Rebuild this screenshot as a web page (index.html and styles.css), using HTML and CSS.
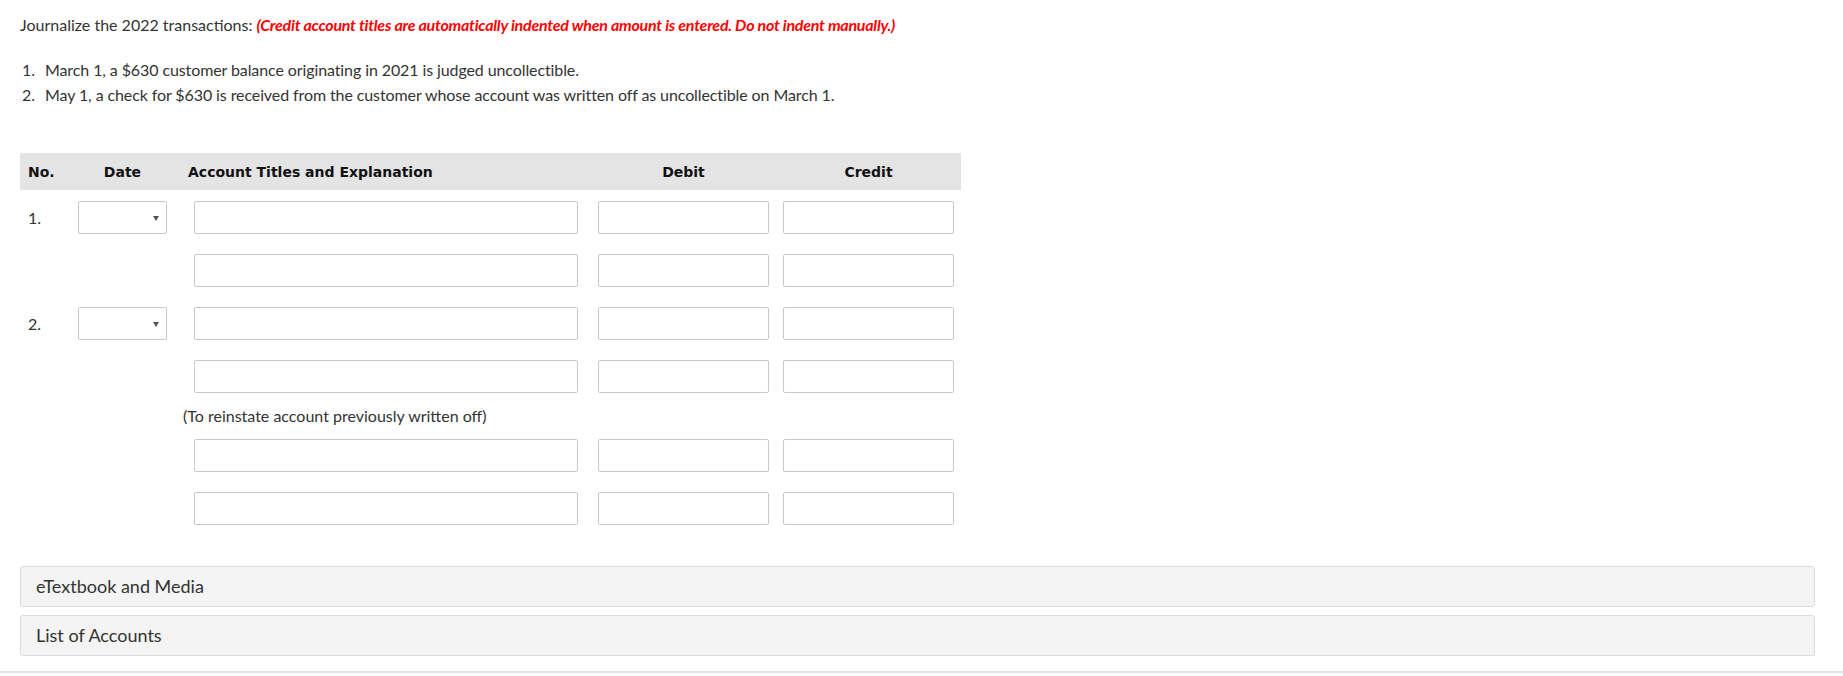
FILE: index.html
```html
<!DOCTYPE html>
<html lang="en">
<head>
    <meta charset="UTF-8">
    <meta name="viewport" content="width=device-width, initial-scale=1.0">
    <title>Journal Entries</title>
    <link rel="stylesheet" href="styles.css">
</head>
<body>

    <div class="question">
        <p class="instructions">Journalize the 2022 transactions: <span class="warning">(Credit account titles are automatically indented when amount is entered. Do not indent manually.)</span></p>

        <ol class="steps">
            <li><span class="num">1.</span>March 1, a $630 customer balance originating in 2021 is judged uncollectible.</li>
            <li><span class="num">2.</span>May 1, a check for $630 is received from the customer whose account was written off as uncollectible on March 1.</li>
        </ol>

        <!-- Tabla del asiento -->
        <div class="journal">
            <div class="journal-head">
                <div class="col-no">No.</div>
                <div class="col-date">Date</div>
                <div class="col-title">Account Titles and Explanation</div>
                <div class="col-amount">Debit</div>
                <div class="col-amount">Credit</div>
            </div>

            <div class="entry-row">
                <div class="entry-no">1.</div>
                <div class="select-box"><select><option></option></select></div>
                <input type="text" class="field field-title">
                <input type="text" class="field field-amount">
                <input type="text" class="field field-amount">
            </div>
            <div class="entry-row">
                <div class="entry-no"></div>
                <div></div>
                <input type="text" class="field field-title">
                <input type="text" class="field field-amount">
                <input type="text" class="field field-amount">
            </div>

            <div class="entry-row">
                <div class="entry-no">2.</div>
                <div class="select-box"><select><option></option></select></div>
                <input type="text" class="field field-title">
                <input type="text" class="field field-amount">
                <input type="text" class="field field-amount">
            </div>
            <div class="entry-row">
                <div class="entry-no"></div>
                <div></div>
                <input type="text" class="field field-title">
                <input type="text" class="field field-amount">
                <input type="text" class="field field-amount">
            </div>

            <div class="entry-note">(To reinstate account previously written off)</div>

            <div class="entry-row">
                <div class="entry-no"></div>
                <div></div>
                <input type="text" class="field field-title">
                <input type="text" class="field field-amount">
                <input type="text" class="field field-amount">
            </div>
            <div class="entry-row">
                <div class="entry-no"></div>
                <div></div>
                <input type="text" class="field field-title">
                <input type="text" class="field field-amount">
                <input type="text" class="field field-amount">
            </div>
        </div>

        <div class="panel">eTextbook and Media</div>
        <div class="panel">List of Accounts</div>
    </div>

    <div class="footer-line"></div>

</body>
</html>
```

FILE: styles.css
```css
/* Base */
body {
    margin: 0;
    font-family: Lato, "Open Sans", Arial, sans-serif;
    font-size: 16px;
    color: #333;
    background: #fff;
}

.question {
    padding: 14px 28px 0 20px;
}

.instructions {
    margin: 0;
    line-height: 22px;
}

.warning {
    color: #ff0000;
    font-weight: bold;
    font-style: italic;
    letter-spacing: -0.25px;
}

/* Lista de transacciones */
.steps {
    list-style: none;
    margin: 21px 0 0;
    padding: 0;
    letter-spacing: -0.1px;
}

.steps li {
    display: flex;
    line-height: 25px;
}

.steps .num {
    width: 25px;
    padding-left: 2px;
    box-sizing: border-box;
}

/* Tabla */
.journal {
    margin-top: 46px;
    width: 941px;
}

.journal-head,
.entry-row {
    display: grid;
    grid-template-columns: 58px 110px 404px 185px 184px;
    align-items: center;
}

.journal-head {
    height: 37px;
    background: #e4e4e4;
    font-family: "DejaVu Sans", Verdana, sans-serif;
    font-weight: bold;
    font-size: 14px;
    color: #111;
}

.col-no {
    padding-left: 8px;
}

.col-date {
    width: 89px;
    text-align: center;
}

.col-amount {
    width: 171px;
    padding-left: 6px;
    text-align: center;
}

.entry-row {
    margin-top: 20px;
    height: 33px;
}

.journal-head + .entry-row {
    margin-top: 11px;
}

.entry-no {
    padding-left: 8px;
}

.field {
    box-sizing: border-box;
    height: 33px;
    margin: 0 0 0 6px;
    border: 1px solid #c8c8c8;
    border-radius: 2px;
    background: #fff;
    font: inherit;
}

.field-title {
    width: 384px;
}

.field-amount {
    width: 171px;
}

.select-box {
    position: relative;
    width: 89px;
    height: 33px;
}

.select-box select {
    appearance: none;
    -webkit-appearance: none;
    box-sizing: border-box;
    width: 100%;
    height: 100%;
    border: 1px solid #c8c8c8;
    border-radius: 2px;
    background: #fff;
    font: inherit;
}

/* flechita del select */
.select-box::after {
    content: "";
    position: absolute;
    right: 8px;
    top: 15px;
    border-left: 3px solid transparent;
    border-right: 3px solid transparent;
    border-top: 5px solid #555;
}

.entry-note {
    margin: 13px 0 -7px 163px;
    line-height: 20px;
}

/* Paneles de abajo */
.panel {
    margin-top: 8px;
    height: 41px;
    box-sizing: border-box;
    padding-left: 15px;
    line-height: 39px;
    font-size: 18px;
    background: #f4f4f4;
    border: 1px solid #dcdcdc;
    border-radius: 3px;
}

.journal + .panel {
    margin-top: 41px;
}

.footer-line {
    margin-top: 15px;
    border-top: 2px solid #e3e3e3;
}
```
